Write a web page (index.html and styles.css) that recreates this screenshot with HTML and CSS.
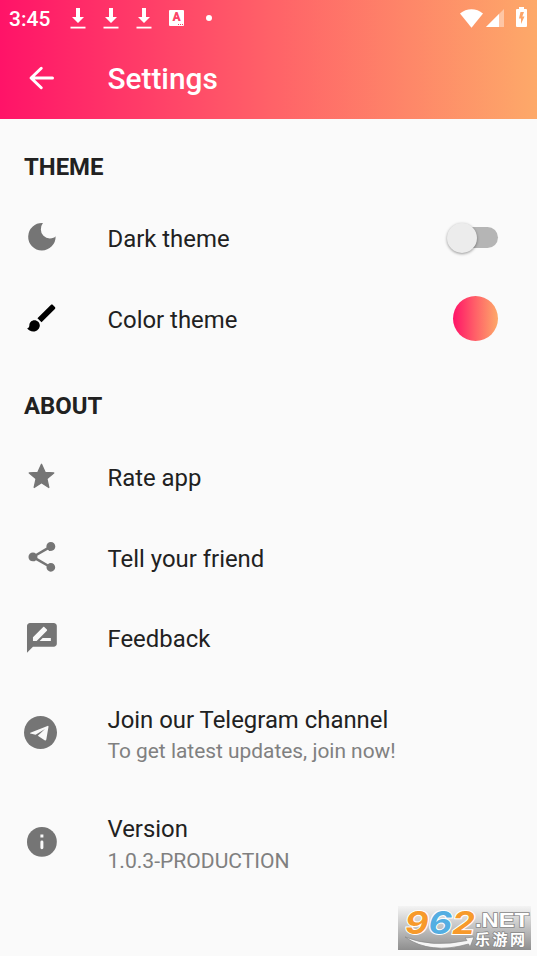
FILE: index.html
```
<!DOCTYPE html>
<html lang="en">
<head>
    <meta charset="UTF-8">
    <meta name="viewport" content="width=device-width, initial-scale=1.0">
    <title>Settings</title>
    <link rel="stylesheet" href="styles.css">
</head>
<body>
    <header class="header">
        <div class="status-bar">
            <span class="clock">3:45</span>
            <svg class="download" viewBox="0 0 16 21"><path d="M6 0h4v9h4l-6 6-6-6h4z"/><path d="M.5 18.7h15v1.8H.5z"/></svg>
            <svg class="download" viewBox="0 0 16 21"><path d="M6 0h4v9h4l-6 6-6-6h4z"/><path d="M.5 18.7h15v1.8H.5z"/></svg>
            <svg class="download" viewBox="0 0 16 21"><path d="M6 0h4v9h4l-6 6-6-6h4z"/><path d="M.5 18.7h15v1.8H.5z"/></svg>
            <span class="badge">A<i></i></span>
            <span class="dot"></span>
            <div class="system">
                <svg class="wifi" viewBox="0 0 23 19"><path d="M0 4.5C6.5-1.2 16.500-1.200 23 4.500L11.500 18.800z"/></svg>
                <svg class="signal" viewBox="0 0 18 18"><path d="M18 0v18H0z" opacity=".4"/><path d="M13 5v13H0z"/></svg>
                <svg class="battery" viewBox="0 0 11 20"><path fill-rule="evenodd" d="M3 0h5v2h2q1 0 1 1v16q0 1-1 1H1q-1 0-1-1V3q0-1 1-1h2zM4.500 5L3 11.500h2V17l3.500-7.500H6.300L8 5z"/></svg>
            </div>
        </div>
        <div class="toolbar">
            <svg class="back" viewBox="0 0 24 24"><path d="M19 12H5M11.500 5.500L4.700 12l6.800 6.500"/></svg>
            <h1>Settings</h1>
        </div>
    </header>

    <main>
        <h2>THEME</h2>
        <div class="row">
            <svg class="icon" viewBox="0 0 24 24"><path d="M12.700 2.700A9.200 9.200 0 1 0 21.200 11.600Q20.200 13 17.300 13A6 6 0 0 1 11.300 7Q11.300 4.500 12.700 2.700z"/></svg>
            <div class="label">Dark theme</div>
            <div class="switch"><span class="thumb"></span></div>
        </div>
        <div class="row">
            <svg class="icon brush" viewBox="0 0 24 24"><path d="M7 13.500c-1.900 0-3.400 1.500-3.400 3.400 0 1.310-.76 2.100-1.600 2.100.92 1.220 2.490 2.200 4.200 2.200 2.600 0 4.400-1.990 4.400-4.200 0-1.900-1.600-3.500-3.600-3.500zm13.710-8.870l-1.340-1.340c-.39-.39-1.020-.39-1.410 0L9 12.250 11.750 15l8.960-8.960c.39-.39.39-1.020 0-1.410z"/></svg>
            <div class="label">Color theme</div>
            <div class="color"></div>
        </div>

        <h2>ABOUT</h2>
        <div class="row about">
            <svg class="icon star" viewBox="0 0 24 24"><path stroke-width="1" stroke-linejoin="round" d="M12 16.770l5.680 3.730-1.510-6.760L21.500 9.300l-6.700-.57L12 2.500 9.200 8.730l-6.700.57 5.330 4.440L6.320 20.500z"/></svg>
            <div class="label">Rate app</div>
        </div>
        <div class="row about">
            <svg class="icon" viewBox="0 0 24 24"><path d="M18 16.080c-.76 0-1.440.3-1.960.77L8.910 12.700c.05-.23.09-.46.09-.7s-.04-.47-.09-.7l7.050-4.110c.54.5 1.250.81 2.040.81 1.660 0 3-1.340 3-3s-1.340-3-3-3-3 1.340-3 3c0 .24.04.47.09.7L8.040 9.810C7.500 9.310 6.790 9 6 9c-1.660 0-3 1.340-3 3s1.340 3 3 3c.79 0 1.500-.31 2.040-.81l7.120 4.160c-.05.21-.08.43-.08.65 0 1.610 1.310 2.920 2.920 2.920s2.920-1.310 2.920-2.920-1.310-2.920-2.920-2.920z"/></svg>
            <div class="label">Tell your friend</div>
        </div>
        <div class="row about">
            <svg class="icon" viewBox="0 0 24 24"><path d="M20 2H4c-1.100 0-1.990.9-1.990 2L2 22l4-4h14c1.100 0 2-.9 2-2V4c0-1.100-.9-2-2-2zM6 14v-2.470l6.880-6.880c.2-.2.51-.2.71 0l1.770 1.770c.2.2.2.51 0 .71L8.470 14H6zm12 0h-7.500l2-2H18v2z"/></svg>
            <div class="label">Feedback</div>
        </div>
        <div class="row tall">
            <svg class="icon telegram" viewBox="0 0 33 33"><circle cx="16.500" cy="16.500" r="16.500"/><path class="cut" d="M6.300 16.700L23.500 9.900Q24.600 9.500 24.500 10.800L22.300 23.600Q22 25 20.600 24.300L13.800 19.700 21 12.900 11.600 18.700 6.300 17.500Q5.500 17.100 6.300 16.700z"/></svg>
            <div class="label">Join our Telegram channel<small>To get latest updates, join now!</small></div>
        </div>
        <div class="row tall">
            <svg class="icon" viewBox="0 0 24 24"><circle cx="12" cy="12" r="10"/><path class="cut" d="M11 7h2v2h-2zM12 11q1 0 1 1v4q0 1-1 1t-1-1v-4q0-1 1-1z"/></svg>
            <div class="label">Version<small class="version">1.0.3-PRODUCTION</small></div>
        </div>
    </main>

    <svg class="watermark" viewBox="0 0 133 44">
        <defs>
            <linearGradient id="plate" x1="0" y1="0" x2="0" y2="1">
                <stop offset="0" stop-color="#f4f4f4"/>
                <stop offset="1" stop-color="#8e8e8e"/>
            </linearGradient>
        </defs>
        <rect width="133" height="44" fill="url(#plate)"/>
        <path class="swoosh" d="M7 31Q34 42 69 34.500L67 32 76 31 72 41 70.500 38Q32 49 7 31z"/>
        <text class="digits" x="7" y="27.500" textLength="70" lengthAdjust="spacingAndGlyphs">9<tspan class="blue">6</tspan>2</text>
        <text class="net" x="77" y="21" textLength="54" lengthAdjust="spacingAndGlyphs">.NET</text>
        <text class="cn" x="77" y="39" textLength="50">乐游网</text>
    </svg>
</body>
</html>
```
FILE: styles.css
```
body {
    margin: 0;
    height: 956px;
    position: relative;
    overflow: hidden;
    background-color: #fafafa;
    color: #212121;
    font-family: Roboto, "Noto Sans CJK SC", sans-serif;
}

h1, h2 {
    margin: 0;
}

.header {
    height: 119px;
    margin-bottom: 0.5px;
    background: linear-gradient(to right, #ff1368, #ff6168 50%, #fda969);
    color: white;
    fill: white;
}

.status-bar {
    display: flex;
    align-items: center;
    height: 36px;
    padding: 0 10px 0 9px;
}

.clock {
    width: 61px;
    font-size: 21px;
    font-weight: 500;
    padding-top: 2px;
}

.download {
    width: 16px;
    height: 21px;
    margin-right: 17px;
}

.badge {
    position: relative;
    width: 15px;
    height: 16px;
    border-radius: 1px;
    background-color: white;
    color: #fb4468;
    font-size: 12px;
    font-weight: 900;
    line-height: 15px;
    text-align: center;
}

.badge i {
    position: absolute;
    right: 1px;
    bottom: 1px;
    width: 5px;
    border-bottom: 1px dotted #fb4468;
}

.dot {
    width: 6px;
    height: 6px;
    margin-left: 22px;
    border-radius: 50%;
    background-color: white;
}

.system {
    display: flex;
    align-items: center;
    margin-left: auto;
}

.wifi {
    width: 23px;
    height: 19px;
    margin-right: 3px;
}

.signal {
    width: 18px;
    height: 18px;
    margin-right: 12px;
}

.battery {
    width: 11px;
    height: 20px;
    margin-top: -2px;
}

.toolbar {
    display: flex;
    align-items: center;
    height: 83px;
    padding-left: 24px;
}

.back {
    width: 36px;
    height: 36px;
    margin-right: 47.5px;
    fill: none;
    stroke: white;
    stroke-width: 2;
    stroke-linecap: round;
    stroke-linejoin: round;
}

h1 {
    font-size: 29.8px;
    font-weight: 500;
    padding-top: 1px;
}

h2 {
    height: 78.5px;
    padding: 33px 24px 0;
    box-sizing: border-box;
    font-size: 23.9px;
    font-weight: 700;
    line-height: 28px;
}

.row {
    display: flex;
    align-items: center;
    height: 80.5px;
    padding: 0 39.5px 0 24px;
}

.row.tall {
    height: 109.5px;
}

.icon {
    width: 35.8px;
    height: 35.8px;
    margin-right: 47.7px;
    margin-top: -2px;
    fill: #757575;
}

.icon.brush {
    fill: black;
}

.icon.star {
    width: 31px;
    height: 31px;
    margin-left: 2.4px;
    margin-right: 50.1px;
    stroke: #757575;
}

.icon.telegram {
    width: 33px;
    height: 33px;
    margin-right: 50.5px;
}

.cut {
    fill: #fafafa;
}

.label {
    flex: 1;
    padding-top: 3px;
    font-size: 23.9px;
    line-height: 31px;
}

.about .label {
    padding-top: 2px;
}

.tall .label {
    padding-top: 4px;
}

.label small {
    display: block;
    font-size: 20.9px;
    color: #808080;
}

.label .version {
    font-size: 21.1px;
}

.switch {
    display: flex;
    align-items: center;
    width: 45px;
    height: 21px;
    margin-top: -1px;
    border-radius: 11px;
    background-color: #b5b5b5;
}

.thumb {
    width: 30px;
    height: 30px;
    margin-left: -6px;
    border-radius: 50%;
    background-color: #ececec;
    box-shadow: 0 1px 3px rgba(0, 0, 0, 0.4);
}

.color {
    width: 45px;
    height: 45px;
    margin-top: -1px;
    border-radius: 50%;
    background: linear-gradient(to right, #ff1368, #ff6168 50%, #fda969);
}

.watermark {
    position: absolute;
    left: 398px;
    top: 906px;
    width: 133px;
    height: 44px;
}

.digits {
    font: italic 700 31px Inter, sans-serif;
    fill: #f79a2b;
    stroke: white;
    stroke-width: 2px;
    paint-order: stroke;
}

.digits .blue {
    fill: #54aee2;
}

.net, .cn {
    font: 700 20px "Liberation Sans", sans-serif;
    fill: white;
    stroke: #888;
    stroke-width: 1.5px;
    paint-order: stroke;
}

.cn {
    font: 700 15px "Noto Sans CJK SC", sans-serif;
}

.swoosh {
    fill: #f5f5f5;
    stroke: #888;
    stroke-width: 0.7px;
}
```
